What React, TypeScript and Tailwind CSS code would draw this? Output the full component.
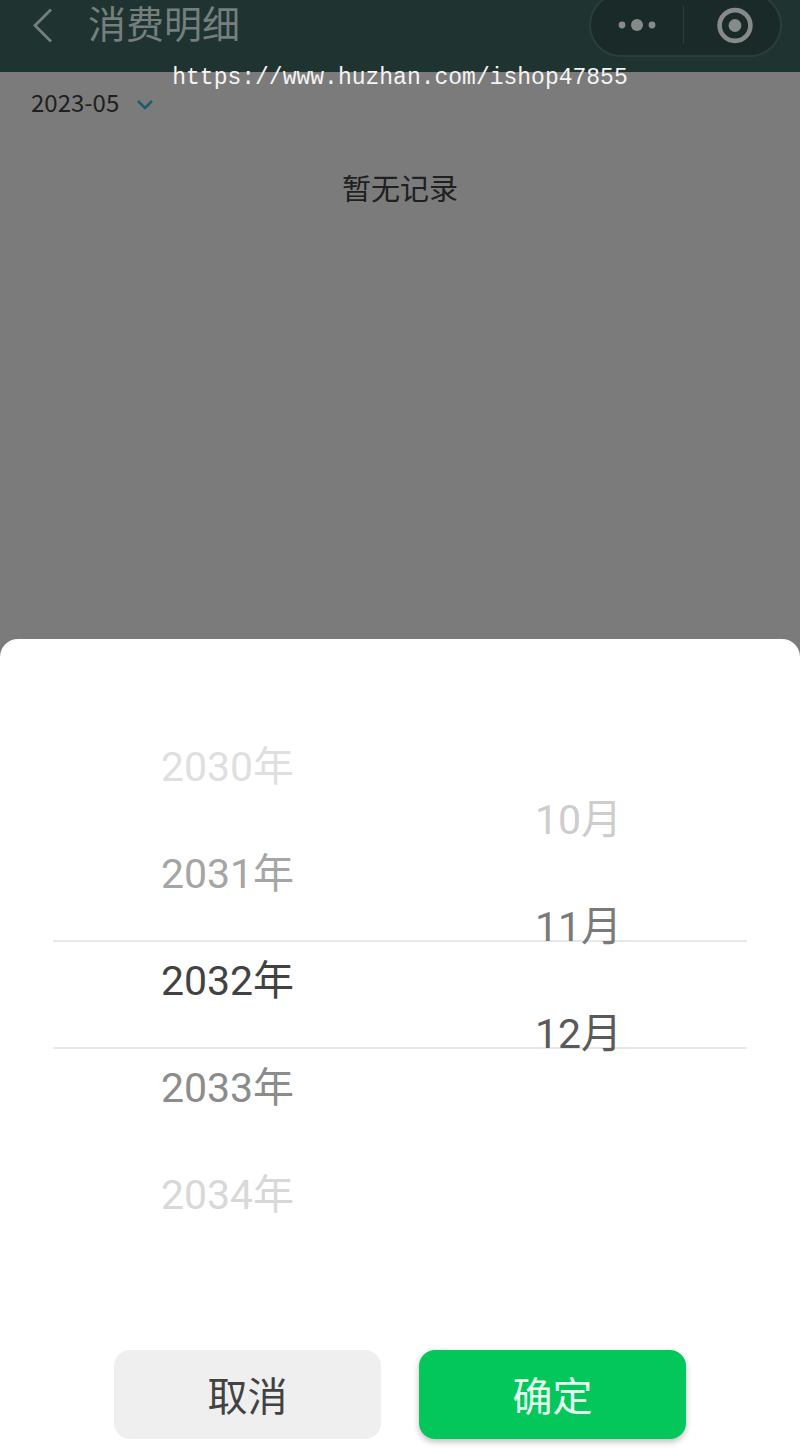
import React, { useState } from "react";

interface PickerItem {
  label: string;
  tone: string;
}

interface PickerColumnProps {
  name: string;
  items: PickerItem[];
  selected: string;
  onSelect: (label: string) => void;
  className?: string;
}

const years: PickerItem[] = [
  { label: "2030年", tone: "text-[#dfdfdf]" },
  { label: "2031年", tone: "text-[#a5a5a5]" },
  { label: "2032年", tone: "text-[#424242]" },
  { label: "2033年", tone: "text-[#8c8c8c]" },
  { label: "2034年", tone: "text-[#d8d8d8]" },
];

const months: PickerItem[] = [
  { label: "10月", tone: "text-[#cdcdcd]" },
  { label: "11月", tone: "text-[#7a7a7a]" },
  { label: "12月", tone: "text-[#5a5a5a]" },
];

const PickerColumn: React.FC<PickerColumnProps> = ({
  name,
  items,
  selected,
  onSelect,
  className = "",
}) => (
  <ul role="listbox" aria-label={name} className={`flex-1 ${className}`}>
    {items.map((item) => (
      <li
        key={item.label}
        role="option"
        aria-selected={item.label === selected}
        onClick={() => onSelect(item.label)}
        className={`flex h-[107px] cursor-pointer items-center justify-center text-[41px] leading-[48px] ${item.tone}`}
      >
        {item.label}
      </li>
    ))}
  </ul>
);

const Header = () => (
  <header className="bg-[#1f3331] pb-[22px] text-[#747f7e]">
    <div className="flex h-[50px] items-center justify-between pr-[18px] pl-7">
      <div className="flex items-center gap-8">
        <button type="button" aria-label="返回">
          <svg width="28" height="40" viewBox="0 0 28 40" fill="none" className="block">
            <path d="M23 4.5L7 20.5L23 36.5" stroke="currentColor" strokeWidth="2.8" />
          </svg>
        </button>
        <h1 className="font-['Roboto','Noto_Sans_CJK_SC',sans-serif] text-[38px] leading-[48px]">
          消费明细
        </h1>
      </div>
      <div className="flex h-16 w-[193px] shrink-0 items-center rounded-full border-2 border-[#2a3f3d] bg-[#192a28] text-[#868b8a]">
        <button type="button" aria-label="更多" className="flex flex-1 justify-center">
          <svg width="40" height="40" viewBox="0 0 40 40" fill="currentColor">
            <circle cx="5" cy="20" r="3.4" />
            <circle cx="20" cy="20" r="6" />
            <circle cx="35" cy="20" r="3.4" />
          </svg>
        </button>
        <span className="h-[38px] w-px bg-[#2a3f3d]" />
        <button type="button" aria-label="关闭" className="flex flex-1 justify-center pl-1">
          <svg width="40" height="40" viewBox="0 0 40 40" fill="none">
            <circle cx="21" cy="20.5" r="15.4" stroke="currentColor" strokeWidth="4.6" />
            <circle cx="21" cy="20.5" r="6.4" fill="currentColor" />
          </svg>
        </button>
      </div>
    </div>
  </header>
);

const App = () => {
  const [year, setYear] = useState("2032年");
  const [month, setMonth] = useState("12月");

  return (
    <div className="relative flex min-h-screen flex-col bg-[#7b7b7b] font-['Noto_Sans_CJK_SC',sans-serif]">
      <Header />

      <p className="pointer-events-none absolute inset-x-0 top-16 text-center font-['Liberation_Mono','Noto_Sans_CJK_SC',monospace] text-[23px] leading-[28px] text-[#f4f4f4]">
        https://www.huzhan.com/ishop47855
      </p>

      <main className="flex-1 text-[#202020]">
        <button type="button" className="ml-[31px] flex h-[60px] items-center gap-4 text-[24px] leading-[30px]">
          2023-05
          <svg width="20" height="20" viewBox="0 0 20 20" fill="none" className="mt-1">
            <path d="M3 7L10 14L17 7" stroke="#1c5c6e" strokeWidth="2.6" />
          </svg>
        </button>
        <p className="mt-9 text-center text-[29px] leading-[38px]">暂无记录</p>
      </main>

      <section
        role="dialog"
        aria-label="选择月份"
        className="rounded-t-[18px] bg-white pt-[74px] pb-[10px]"
      >
        <div className="relative flex pr-[46px] pl-[52px] font-['Roboto','Noto_Sans_CJK_SC',sans-serif]">
          {/* frame of the selected row */}
          <div className="pointer-events-none absolute inset-x-[53px] top-[227px] h-[109px] border-y-2 border-[#e8e8e8]" />
          <PickerColumn
            name="年"
            items={years}
            selected={year}
            onSelect={setYear}
            className="relative"
          />
          <PickerColumn
            name="月"
            items={months}
            selected={month}
            onSelect={setMonth}
            className="relative pt-[53px]"
          />
        </div>

        <div className="mt-[102px] flex justify-center gap-[38px] text-[40px] leading-[48px]">
          <button
            type="button"
            className="h-[89px] w-[267px] rounded-2xl bg-[#efefef] pb-0.5 text-[#424242]"
          >
            取消
          </button>
          <button
            type="button"
            className="h-[89px] w-[267px] rounded-2xl bg-[#04c75b] pb-0.5 text-[#e4fff0] shadow-[0_3px_6px_rgba(0,0,0,0.25)]"
          >
            确定
          </button>
        </div>
      </section>
    </div>
  );
};

export default App;
